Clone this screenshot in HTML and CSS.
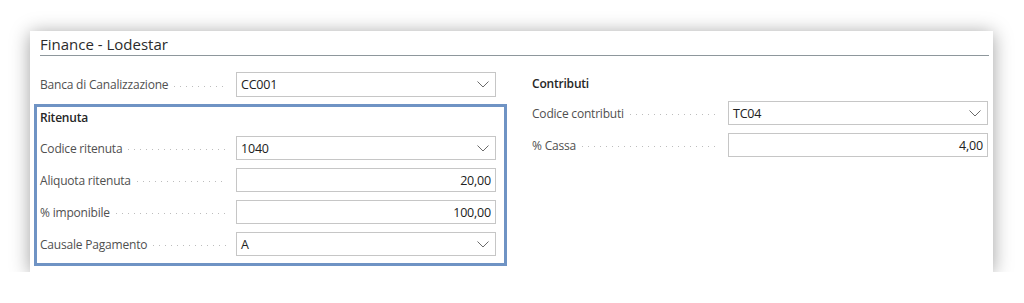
FILE: index.html
```html
<!DOCTYPE html>
<html lang="it">
<head>
    <meta charset="UTF-8">
    <title>Finance - Lodestar</title>
    <link rel="stylesheet" href="styles.css">
</head>
<body>

<div class="card">
    <h1 class="card-title">Finance - Lodestar</h1>

    <div class="columns">
        <!-- colonna sinistra -->
        <div class="col col-left">
            <div class="row row-plain">
                <div class="caption"><span class="label">Banca di Canalizzazione</span><span class="leader"></span></div>
                <div class="field select">
                    <span class="value">CC001</span>
                    <svg class="chevron" width="12" height="7" viewBox="0 0 12 7"><path d="M0.5 0.5 L6 6 L11.5 0.5" fill="none" stroke="#6b6b6b" stroke-width="1"/></svg>
                </div>
            </div>

            <div class="group">
                <div class="group-title">Ritenuta</div>
                <div class="row">
                    <div class="caption"><span class="label">Codice ritenuta</span><span class="leader"></span></div>
                    <div class="field select">
                        <span class="value">1040</span>
                        <svg class="chevron" width="12" height="7" viewBox="0 0 12 7"><path d="M0.5 0.5 L6 6 L11.5 0.5" fill="none" stroke="#6b6b6b" stroke-width="1"/></svg>
                    </div>
                </div>
                <div class="row">
                    <div class="caption"><span class="label">Aliquota ritenuta</span><span class="leader"></span></div>
                    <div class="field number"><span class="value">20,00</span></div>
                </div>
                <div class="row">
                    <div class="caption"><span class="label">% imponibile</span><span class="leader"></span></div>
                    <div class="field number"><span class="value">100,00</span></div>
                </div>
                <div class="row">
                    <div class="caption"><span class="label">Causale Pagamento</span><span class="leader"></span></div>
                    <div class="field select">
                        <span class="value">A</span>
                        <svg class="chevron" width="12" height="7" viewBox="0 0 12 7"><path d="M0.5 0.5 L6 6 L11.5 0.5" fill="none" stroke="#6b6b6b" stroke-width="1"/></svg>
                    </div>
                </div>
            </div>
        </div>

        <!-- colonna destra -->
        <div class="col col-right">
            <div class="group-title">Contributi</div>
            <div class="row">
                <div class="caption"><span class="label">Codice contributi</span><span class="leader"></span></div>
                <div class="field select">
                    <span class="value">TC04</span>
                    <svg class="chevron" width="12" height="7" viewBox="0 0 12 7"><path d="M0.5 0.5 L6 6 L11.5 0.5" fill="none" stroke="#6b6b6b" stroke-width="1"/></svg>
                </div>
            </div>
            <div class="row">
                <div class="caption"><span class="label">% Cassa</span><span class="leader"></span></div>
                <div class="field number"><span class="value">4,00</span></div>
            </div>
        </div>
    </div>
</div>

</body>
</html>
```

FILE: styles.css
```css
body {
    margin: 0;
    padding: 31px 0 0 30px;
    background: #fff;
    font-family: "Open Sans", "Noto Sans", sans-serif;
    font-size: 12px;
    letter-spacing: -0.2px;
    color: #212121;
}

.card {
    width: 963px;
    height: 241px;
    box-sizing: border-box;
    background: #fff;
    padding-top: 2px;
    box-shadow: 0 2px 18px rgba(0, 0, 0, 0.38);
}

.card-title {
    margin: 0 4px 0 10px;
    font-size: 15px;
    font-weight: 400;
    letter-spacing: 0;
    line-height: 22px;
    color: #2b2b2b;
    border-bottom: 1px solid #8e979c;
}

.columns {
    display: flex;
    padding: 16px 0 0 4px;
}

.col-left {
    width: 473px;
}

.col-right {
    margin-left: 25px;
    padding-top: 2px;
}

.row {
    display: grid;
    grid-template-columns: 196px 260px;
    align-items: stretch;
    height: 24px;
    margin-bottom: 8px;
}

.row-plain {
    height: 25px;
    padding-left: 6px;
    margin-bottom: 7px;
}

.caption {
    display: flex;
    align-items: center;
}

.label {
    color: #505050;
    white-space: nowrap;
    padding-right: 6px;
}

.leader {
    flex: 1;
    height: 1px;
    margin: 3px 9px 0 0;
    background-image: linear-gradient(to right, #bdbdbd 1px, transparent 1px);
    background-size: 6px 1px;
    background-repeat: repeat-x;
}

.field {
    box-sizing: border-box;
    border: 1px solid #c6c6c6;
    display: flex;
    align-items: center;
    padding: 0 4px;
    font-size: 12.5px;
}

.number {
    justify-content: flex-end;
}

.select .value {
    flex: 1;
}

.chevron {
    margin-right: 2px;
}

.group {
    border: 3px solid #6f93c4;
    padding: 1px 7px 0 3px;
}

.group .row:last-child {
    margin-bottom: 7px;
}

.group-title {
    font-weight: 600;
    line-height: 20px;
    margin-bottom: 8px;
    color: #262626;
}

.col-right .group-title {
    margin-bottom: 7px;
}
```
